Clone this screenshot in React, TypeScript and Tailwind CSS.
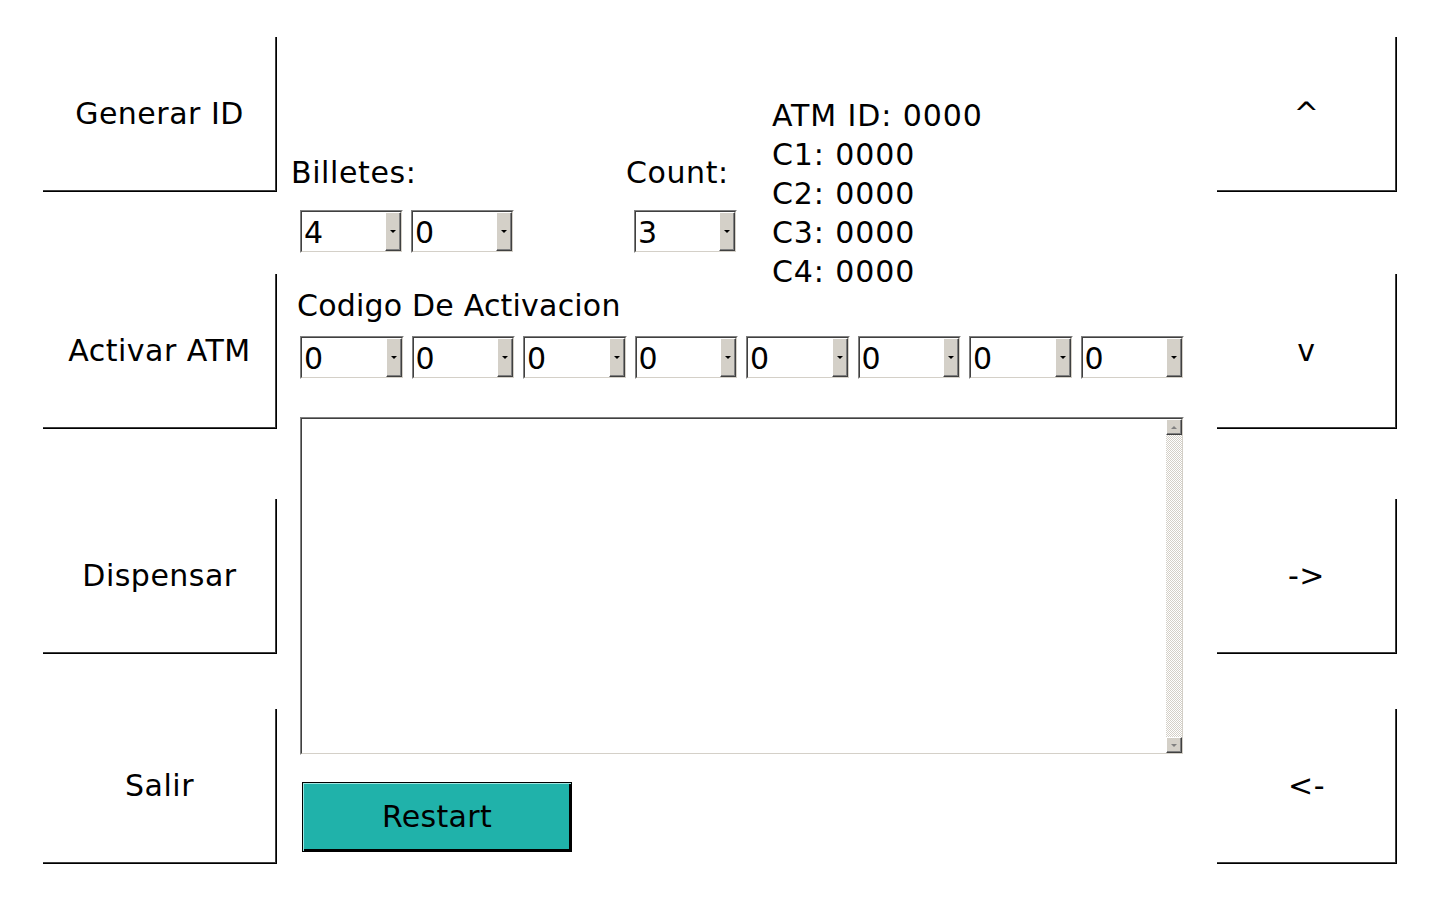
import React from "react";

function SideButton({ label, mt }: { label: string; mt: string }) {
  return (
    <button
      className={`${mt} flex h-[155px] w-full items-center justify-center border-r border-b border-black bg-white text-[30px] leading-none tracking-[0.5px] text-black shadow-[inset_-1px_-1px_0_#404040]`}
    >
      <span>{label}</span>
    </button>
  );
}

function Arrow({ up, gray }: { up?: boolean; gray?: boolean }) {
  return (
    <span
      className={
        up
          ? `h-0 w-0 border-r-[3px] border-b-[3px] border-l-[3px] border-r-transparent border-l-transparent ${gray ? "border-b-[#808080]" : "border-b-black"}`
          : `h-0 w-0 border-t-[3px] border-r-[3px] border-l-[3px] border-r-transparent border-l-transparent ${gray ? "border-t-[#808080]" : "border-t-black"}`
      }
    />
  );
}

function Select({ value }: { value: string }) {
  return (
    <div className="h-[43px] w-full border border-t-[#808080] border-l-[#808080] border-r-white border-b-white">
      <div className="flex h-full w-full border border-t-[#404040] border-l-[#404040] border-r-[#d4d0c8] border-b-[#d4d0c8] bg-white">
        <div className="flex flex-1 items-center pt-[3px] pl-[2px] text-[30px] leading-none">{value}</div>
        <div className="flex w-[16px] items-center justify-center border-t border-l border-t-white border-l-white border-r border-b border-r-[#404040] border-b-[#404040] bg-[#d4d0c8] shadow-[inset_-1px_-1px_0_#808080]">
          <Arrow />
        </div>
      </div>
    </div>
  );
}

function ScrollBtn({ up }: { up?: boolean }) {
  return (
    <div className="flex h-[16px] w-full items-center justify-center border-t border-l border-t-white border-l-white border-r border-b border-r-[#404040] border-b-[#404040] bg-[#d4d0c8] shadow-[inset_-1px_-1px_0_#808080]">
      <Arrow up={up} gray />
    </div>
  );
}

export default function App() {
  return (
    <div className="flex h-[900px] w-[1440px] bg-white font-['DejaVu_Sans',sans-serif] text-[30px] text-black">
      {/* Left column */}
      <div className="ml-[43px] flex w-[234px] flex-col">
        <SideButton label="Generar ID" mt="mt-[37px]" />
        <SideButton label="Activar ATM" mt="mt-[82px]" />
        <SideButton label="Dispensar" mt="mt-[70px]" />
        <SideButton label="Salir" mt="mt-[55px]" />
      </div>

      {/* Middle */}
      <div className="flex w-[940px] flex-col pt-[37px] pl-[23px]">
        <div className="flex items-start">
          <div className="mt-[120px] flex w-[214px] flex-col">
            <div className="ml-[-9px] h-[32px] leading-[32px] tracking-[0.6px]">Billetes:</div>
            <div className="mt-[21px] grid grid-cols-2 gap-[8px]">
              <Select value="4" />
              <Select value="0" />
            </div>
          </div>
          <div className="mt-[120px] ml-[112px] flex w-[111px] flex-col">
            <div className="h-[32px] leading-[32px] tracking-[0.6px]">Count:</div>
            <div className="mt-[21px] ml-[8px] w-[103px]">
              <Select value="3" />
            </div>
          </div>
          <div className="mt-[59px] ml-[35px] flex flex-col leading-[39px] tracking-[0.9px]">
            <div>ATM ID: 0000</div>
            <div>C1: 0000</div>
            <div>C2: 0000</div>
            <div>C3: 0000</div>
            <div>C4: 0000</div>
          </div>
        </div>

        <div className="mt-[-1px] ml-[-3px] h-[32px] leading-[32px] tracking-[0.2px]">Codigo De Activacion</div>
        <div className="mt-[14px] grid w-[884px] grid-cols-8 gap-x-[8px]">
          {Array.from({ length: 8 }).map((_, i) => (
            <Select key={i} value="0" />
          ))}
        </div>

        <div className="mt-[38px] h-[338px] w-[884px] border border-t-[#808080] border-l-[#808080] border-r-white border-b-white">
          <div className="flex h-full w-full border border-t-[#404040] border-l-[#404040] border-r-[#d4d0c8] border-b-[#d4d0c8] bg-white">
            <div className="flex-1" />
            <div className="flex w-[16px] flex-col">
              <ScrollBtn up />
              <div className="flex-1 bg-[repeating-conic-gradient(#d4d0c8_0%_25%,#ffffff_0%_50%)] bg-[length:2px_2px]" />
              <ScrollBtn />
            </div>
          </div>
        </div>

        <button className="mt-[27px] ml-[2px] flex h-[70px] w-[270px] items-center justify-center border border-black bg-[#20b2aa] text-[30px] leading-none tracking-[0.3px] text-black shadow-[inset_1px_1px_0_#9fe6e1,inset_-2px_-2px_0_#000]">
          Restart
        </button>
      </div>

      {/* Right column */}
      <div className="flex w-[180px] flex-col">
        <SideButton label="^" mt="mt-[37px]" />
        <SideButton label="v" mt="mt-[82px]" />
        <SideButton label="->" mt="mt-[70px]" />
        <SideButton label="<-" mt="mt-[55px]" />
      </div>
    </div>
  );
}
